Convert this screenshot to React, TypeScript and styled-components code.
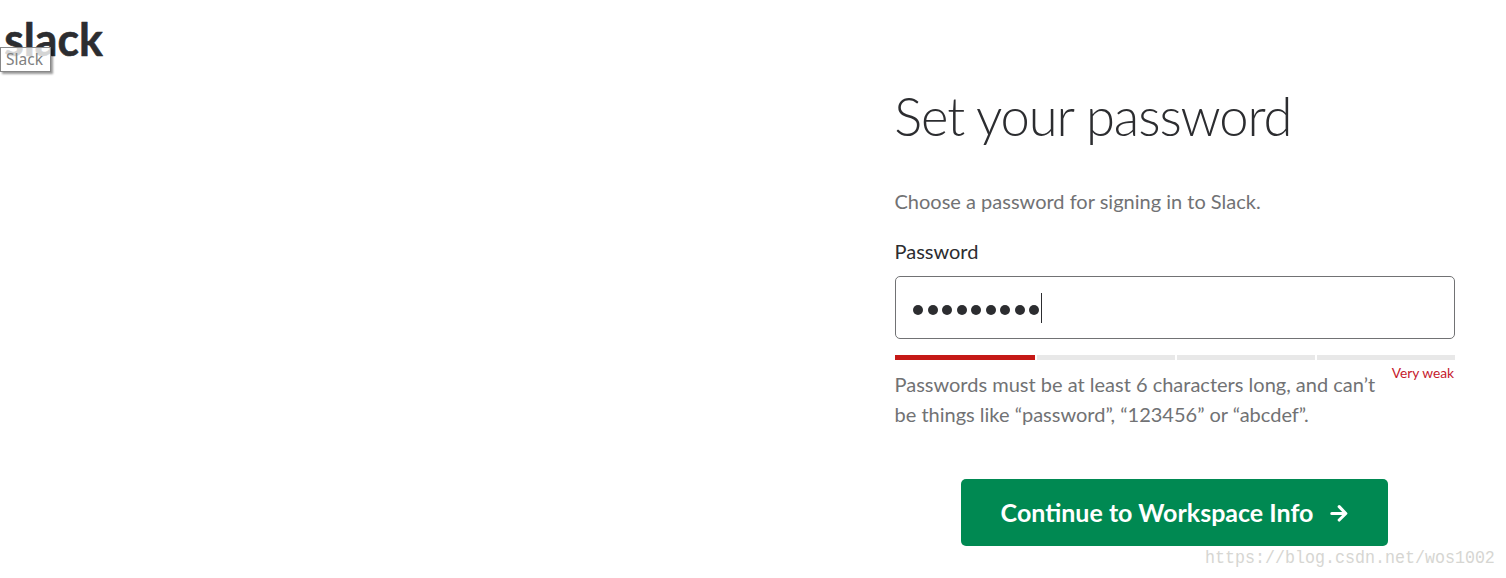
import React from 'react';
import styled, { createGlobalStyle } from 'styled-components';

const Global = createGlobalStyle`
  * { box-sizing: border-box; }
  body { margin: 0; background: #fff; font-family: Lato, "Liberation Sans", sans-serif; color: #2c2d30; }
  h1, p { margin: 0; font-weight: 400; }
`;

const Page = styled.main`
  position: relative;
  width: 1506px;
  height: 578px;
  overflow: hidden;
  display: flex;
  justify-content: space-between;
  padding-right: 51px;
`;

const Brand = styled.div`
  position: relative;
  align-self: flex-start;
`;

const Wordmark = styled.svg`
  display: block;
  width: 120px;
  height: 70px;
`;

const Tooltip = styled.div`
  position: absolute;
  left: 0;
  top: 47px;
  width: 51px;
  height: 25px;
  padding-left: 5px;
  border: 1px solid #888;
  background: rgba(255, 255, 255, 0.8);
  box-shadow: 2px 2px 2px rgba(0, 0, 0, 0.4);
  font: 15.5px/23px "Noto Sans", sans-serif;
  color: #808080;
`;

const Form = styled.section`
  width: 560px;
  padding-top: 83px;
  display: flex;
  flex-direction: column;
`;

const Title = styled.h1`
  margin-left: -0.7px;
  font-size: 52.5px;
  line-height: 66px;
  font-weight: 300;
  letter-spacing: -1.1px;
  white-space: nowrap;
`;

const Text = styled.p`
  font-size: 20px;
  line-height: 30px;
  color: #717274;
`;

const Intro = styled(Text)`
  margin-top: 37px;
  margin-left: -0.5px;
`;

const Label = styled.label`
  margin-top: 20px;
  margin-left: -0.5px;
  font-size: 20px;
  line-height: 30px;
`;

const Field = styled.div`
  height: 63px;
  margin-top: 10px;
  padding: 0 17px;
  border: 1px solid #717274;
  border-radius: 5px;
  display: flex;
  align-items: center;
`;

const Dots = styled.div`
  display: flex;
  gap: 4.5px;
  padding-top: 5px;
`;

const Dot = styled.span`
  width: 10px;
  height: 10px;
  border-radius: 50%;
  background: #2c2d30;
`;

const Caret = styled.span`
  width: 1px;
  height: 30px;
  margin-left: 2px;
  background: #2c2d30;
`;

const Meter = styled.div`
  display: grid;
  grid-template-columns: 140px 138px 138px 138px;
  gap: 2px;
  margin-top: 16px;
  height: 5px;
`;

const Segment = styled.span<{ $on?: boolean }>`
  background: ${(p) => (p.$on ? '#c51916' : '#e8e8e8')};
`;

const HintRow = styled.div`
  display: flex;
  justify-content: space-between;
  margin-top: 9px;
`;

const Hint = styled(Text)`
  width: 490px;
  margin-left: -0.5px;
  white-space: nowrap;
`;

const Strength = styled.span`
  margin: -5px 1px 0 0;
  font-size: 13.75px;
  line-height: 18px;
  white-space: nowrap;
  color: #c5192c;
`;

const Submit = styled.button`
  align-self: flex-start;
  width: 427px;
  height: 67px;
  margin-top: 50px;
  margin-left: 66px;
  padding: 0 0 2px;
  border: 0;
  border-radius: 5px;
  display: flex;
  align-items: center;
  justify-content: center;
  gap: 17px;
  background: #008952;
  color: #fff;
  font: 700 25px/30px Lato, sans-serif;
  white-space: nowrap;
`;

const Watermark = styled.span`
  position: absolute;
  left: 1205px;
  top: 546px;
  font: 16.66px/24px "Liberation Mono", monospace;
  color: #d6d6d2;
  transform: scaleY(1.15);
`;

export default function App() {
  return (
    <Page>
      <Global />
      <Brand>
        <Wordmark viewBox="0 0 120 70" aria-label="slack">
          <text x="4.2" y="55.7" textLength="98.5" lengthAdjust="spacingAndGlyphs" fontFamily="Lato" fontWeight="700" fontSize="46.5" fill="#2c2d30" stroke="#2c2d30" strokeWidth="0.6" strokeLinejoin="round">slack</text>
        </Wordmark>
        <Tooltip>Slack</Tooltip>
      </Brand>
      <Form>
        <Title>Set your password</Title>
        <Intro>Choose a password for signing in to Slack.</Intro>
        <Label>Password</Label>
        <Field>
          <Dots>
            {Array.from({ length: 9 }, (_, i) => <Dot key={i} />)}
          </Dots>
          <Caret />
        </Field>
        <Meter>
          <Segment $on />
          <Segment />
          <Segment />
          <Segment />
        </Meter>
        <HintRow>
          <Hint>
            Passwords must be at least 6 characters long, and can’t
            <br />
            be things like “password”, “123456” or “abcdef”.
          </Hint>
          <Strength>Very weak</Strength>
        </HintRow>
        <Submit>
          Continue to Workspace Info
          <svg width="18" height="20" viewBox="0 0 18 20" fill="none" stroke="#fff" strokeWidth="3.1" strokeLinecap="round" strokeLinejoin="round">
            <path d="M1.8 11.5H15M9.2 4.7L15.8 11.5L9.2 18" />
          </svg>
        </Submit>
      </Form>
      <Watermark>https://blog.csdn.net/wos1002</Watermark>
    </Page>
  );
}
